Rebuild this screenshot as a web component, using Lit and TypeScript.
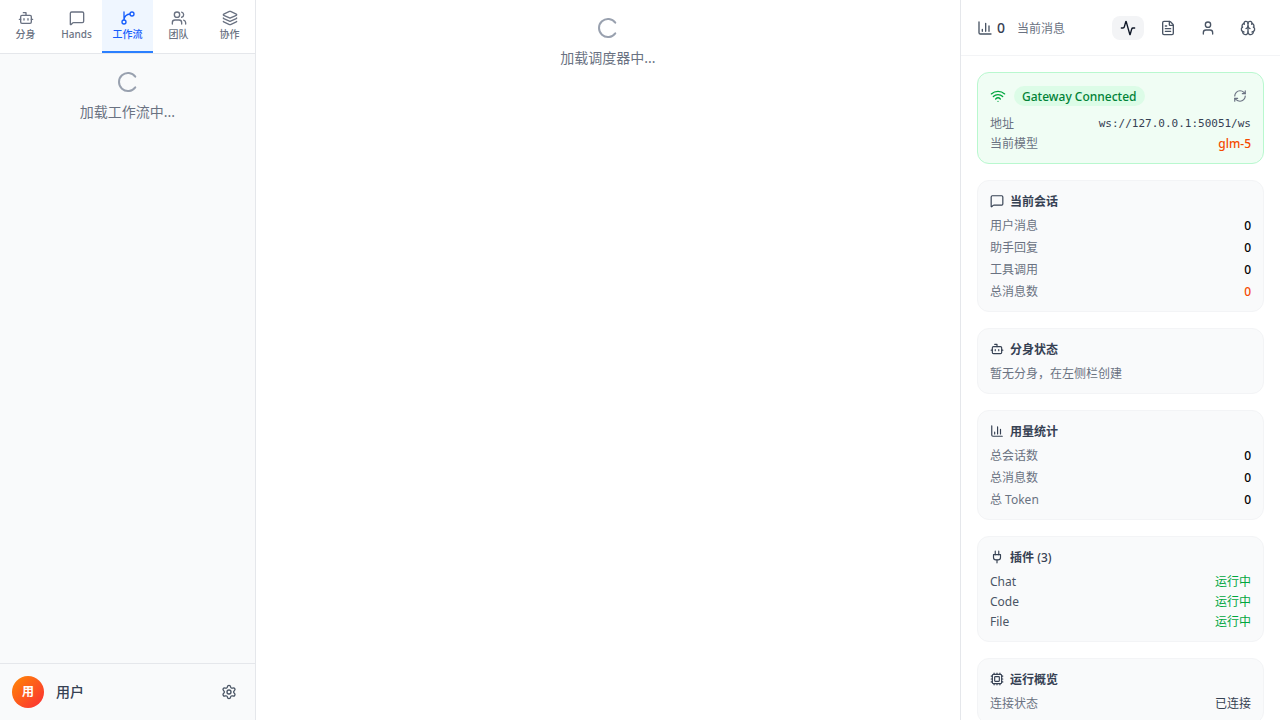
import { LitElement, html, svg, css, nothing } from "lit";
import { customElement, property, state } from "lit/decorators.js";
import { classMap } from "lit/directives/class-map.js";

const ICONS = {
  bot: svg`<path d="M12 8V4H8"/><rect width="16" height="12" x="4" y="8" rx="2"/><path d="M2 14h2M20 14h2M15 13v2M9 13v2"/>`,
  message: svg`<path d="M22 17a2 2 0 0 1-2 2H6.828a2 2 0 0 0-1.414.586l-2.202 2.202A.71.71 0 0 1 2 21.286V5a2 2 0 0 1 2-2h16a2 2 0 0 1 2 2z"/>`,
  branch: svg`<path d="M15 6a9 9 0 0 0-9 9V3"/><circle cx="18" cy="6" r="3"/><circle cx="6" cy="18" r="3"/>`,
  users: svg`<path d="M16 21v-2a4 4 0 0 0-4-4H6a4 4 0 0 0-4 4v2"/><path d="M16 3.128a4 4 0 0 1 0 7.744"/><path d="M22 21v-2a4 4 0 0 0-3-3.87"/><circle cx="9" cy="7" r="4"/>`,
  layers: svg`<path d="M12.83 2.18a2 2 0 0 0-1.66 0L2.6 6.08a1 1 0 0 0 0 1.83l8.58 3.91a2 2 0 0 0 1.66 0l8.58-3.9a1 1 0 0 0 0-1.83z"/><path d="M2 12a1 1 0 0 0 .58.91l8.6 3.91a2 2 0 0 0 1.65 0l8.58-3.9A1 1 0 0 0 22 12"/><path d="M2 17a1 1 0 0 0 .58.91l8.6 3.91a2 2 0 0 0 1.65 0l8.58-3.9A1 1 0 0 0 22 17"/>`,
  settings: svg`<path d="M9.671 4.136a2.34 2.34 0 0 1 4.659 0 2.34 2.34 0 0 0 3.319 1.915 2.34 2.34 0 0 1 2.33 4.033 2.34 2.34 0 0 0 0 3.831 2.34 2.34 0 0 1-2.33 4.033 2.34 2.34 0 0 0-3.319 1.915 2.34 2.34 0 0 1-4.659 0 2.34 2.34 0 0 0-3.32-1.915 2.34 2.34 0 0 1-2.33-4.033 2.34 2.34 0 0 0 0-3.831A2.34 2.34 0 0 1 6.35 6.051a2.34 2.34 0 0 0 3.319-1.915"/><circle cx="12" cy="12" r="3"/>`,
  chart: svg`<path d="M3 3v16a2 2 0 0 0 2 2h16"/><path d="M18 17V9M13 17V5M8 17v-3"/>`,
  activity: svg`<path d="M22 12h-2.48a2 2 0 0 0-1.93 1.46l-2.35 8.36a.25.25 0 0 1-.48 0L9.24 2.18a.25.25 0 0 0-.48 0l-2.35 8.36A2 2 0 0 1 4.49 12H2"/>`,
  file: svg`<path d="M6 22a2 2 0 0 1-2-2V4a2 2 0 0 1 2-2h8a2.4 2.4 0 0 1 1.704.706l3.588 3.588A2.4 2.4 0 0 1 20 8v12a2 2 0 0 1-2 2z"/><path d="M14 2v5a1 1 0 0 0 1 1h5"/><path d="M10 9H8M16 13H8M16 17H8"/>`,
  user: svg`<path d="M19 21v-2a4 4 0 0 0-4-4H9a4 4 0 0 0-4 4v2"/><circle cx="12" cy="7" r="4"/>`,
  brain: svg`<path d="M12 18V5"/><path d="M15 13a4.17 4.17 0 0 1-3-4 4.17 4.17 0 0 1-3 4"/><path d="M17.598 6.5A3 3 0 1 0 12 5a3 3 0 1 0-5.598 1.5"/><path d="M17.997 5.125a4 4 0 0 1 2.526 5.77"/><path d="M18 18a4 4 0 0 0 2-7.464"/><path d="M19.967 17.483A4 4 0 1 1 12 18a4 4 0 1 1-7.967-.517"/><path d="M6 18a4 4 0 0 1-2-7.464"/><path d="M6.003 5.125a4 4 0 0 0-2.526 5.77"/>`,
  wifi: svg`<path d="M12 20h.01"/><path d="M2 8.82a15 15 0 0 1 20 0"/><path d="M5 12.859a10 10 0 0 1 14 0"/><path d="M8.5 16.429a5 5 0 0 1 7 0"/>`,
  refresh: svg`<path d="M3 12a9 9 0 0 1 9-9 9.75 9.75 0 0 1 6.74 2.74L21 8"/><path d="M21 3v5h-5"/><path d="M21 12a9 9 0 0 1-9 9 9.75 9.75 0 0 1-6.74-2.74L3 16"/><path d="M8 16H3v5"/>`,
  plug: svg`<path d="M12 22v-5M9 8V2M15 8V2"/><path d="M18 8v5a4 4 0 0 1-4 4h-4a4 4 0 0 1-4-4V8Z"/>`,
  cpu: svg`<path d="M12 20v2M12 2v2M17 20v2M17 2v2M2 12h2M2 17h2M2 7h2M20 12h2M20 17h2M20 7h2M7 20v2M7 2v2"/><rect x="4" y="4" width="16" height="16" rx="2"/><rect x="8" y="8" width="8" height="8" rx="1"/>`,
  loader: svg`<path transform="rotate(36 12 12)" d="M21 12a9 9 0 1 1-6.219-8.56"/>`,
};

type IconName = keyof typeof ICONS;

@customElement("ui-icon")
class UiIcon extends LitElement {
  @property() name: IconName = "bot";
  @property({ type: Number }) size = 16;

  static styles = css`
    :host {
      display: block;
      flex: none;
    }
    svg {
      display: block;
      fill: none;
      stroke: currentColor;
      stroke-width: 2;
      stroke-linecap: round;
      stroke-linejoin: round;
    }
  `;

  render() {
    return html`<svg width=${this.size} height=${this.size} viewBox="0 0 24 24" aria-hidden="true">${ICONS[this.name]}</svg>`;
  }
}

@customElement("loading-note")
class LoadingNote extends LitElement {
  @property() label = "";

  static styles = css`
    :host {
      display: flex;
      flex-direction: column;
      align-items: center;
      gap: 8px;
      padding: 16px;
      font-size: 14px;
      line-height: 20px;
      color: #6a7282;
    }
    ui-icon {
      color: #99a1af;
    }
  `;

  render() {
    return html`<ui-icon name="loader" size="24"></ui-icon><span role="status">${this.label}</span>`;
  }
}

interface Row {
  label: string;
  value: string;
  tone?: "accent" | "ok" | "plain";
}

@customElement("info-card")
class InfoCard extends LitElement {
  @property() icon: IconName = "bot";
  @property() heading = "";
  @property() suffix = "";
  @property() note = "";
  @property({ type: Boolean }) compact = false;
  @property({ attribute: false }) rows: Row[] = [];

  static styles = css`
    :host {
      display: block;
      padding: 12px 12px 10px;
      border: 1px solid #f3f4f6;
      border-radius: 12px;
      background: #f9fafb;
      font-size: 12px;
      line-height: 18px;
      color: #6a7282;
    }
    h3 {
      display: flex;
      align-items: center;
      gap: 6px;
      margin: 0 0 6px;
      font-size: 12px;
      font-weight: 600;
      color: #364153;
    }
    h3 ui-icon {
      margin-bottom: 2px;
    }
    .suffix {
      font-weight: 500;
    }
    p,
    dl,
    dd {
      margin: 0;
    }
    dl {
      display: grid;
      gap: 4px;
    }
    .row {
      display: flex;
      justify-content: space-between;
    }
    dd {
      font-weight: 500;
      color: #000;
    }
    .accent {
      color: #f54a00;
    }
    .ok {
      font-weight: 400;
      color: #00a63e;
    }
    .plain {
      font-weight: 400;
      color: #364153;
    }
    .compact {
      gap: 2px;
      color: #4a5565;
    }
  `;

  render() {
    return html`
      <h3>
        <ui-icon name=${this.icon} size="14"></ui-icon>
        <span>${this.heading}${this.suffix ? html` <span class="suffix">${this.suffix}</span>` : nothing}</span>
      </h3>
      ${this.note ? html`<p>${this.note}</p>` : nothing}
      ${this.rows.length
        ? html`<dl class=${classMap({ compact: this.compact })}>
            ${this.rows.map(
              (r) => html`<div class="row"><dt>${r.label}</dt><dd class=${r.tone ?? ""}>${r.value}</dd></div>`
            )}
          </dl>`
        : nothing}
    `;
  }
}

@customElement("app-root")
class AppRoot extends LitElement {
  @state() private tab = "工作流";
  @state() private panel = "状态";

  private tabs: { icon: IconName; label: string }[] = [
    { icon: "bot", label: "分身" },
    { icon: "message", label: "Hands" },
    { icon: "branch", label: "工作流" },
    { icon: "users", label: "团队" },
    { icon: "layers", label: "协作" },
  ];

  private panels: { icon: IconName; label: string }[] = [
    { icon: "activity", label: "状态" },
    { icon: "file", label: "文件" },
    { icon: "user", label: "用户" },
    { icon: "brain", label: "记忆" },
  ];

  static styles = css`
    :host {
      display: grid;
      grid-template-columns: 256px minmax(0, 1fr) 320px;
      height: 100vh;
      overflow: hidden;
      background: #fff;
      color: #101828;
      font-family: "Noto Sans", "Noto Sans CJK SC", sans-serif;
      font-size: 14px;
      line-height: 20px;
    }
    * {
      box-sizing: border-box;
    }
    button {
      display: flex;
      align-items: center;
      margin: 0;
      padding: 0;
      border: 0;
      background: none;
      font: inherit;
      color: #4a5565;
      cursor: pointer;
    }
    .sidebar {
      display: flex;
      flex-direction: column;
      min-height: 0;
      border-right: 1px solid #e5e7eb;
      background: #f9fafb;
    }
    .tabs {
      display: flex;
      border-bottom: 1px solid #e5e7eb;
      background: #fff;
    }
    .tab {
      flex: 1;
      flex-direction: column;
      padding: 10px 0 8px;
      border-bottom: 2px solid transparent;
      font-size: 10px;
      line-height: 17px;
      font-weight: 500;
      color: #6a7282;
    }
    .tab.active {
      border-bottom-color: #2b7fff;
      background: #eff6ff;
      color: #155dfc;
    }
    .grow {
      flex: 1;
      min-height: 0;
    }
    .account {
      display: flex;
      align-items: center;
      gap: 12px;
      padding: 12px;
      border-top: 1px solid #e5e7eb;
    }
    .avatar {
      display: grid;
      place-items: center;
      width: 32px;
      height: 32px;
      border-radius: 50%;
      background: linear-gradient(to bottom right, #ff8904, #fb2c36);
      font-size: 12px;
      line-height: 18px;
      font-weight: 700;
      color: #fff;
    }
    .name {
      flex: 1;
      font-weight: 500;
      color: #364153;
    }
    .account button {
      padding: 6px;
    }
    .details {
      display: flex;
      flex-direction: column;
      min-height: 0;
      border-left: 1px solid #e5e7eb;
    }
    .topbar {
      display: flex;
      align-items: center;
      justify-content: space-between;
      height: 56px;
      padding: 0 16px;
      border-bottom: 1px solid #f3f4f6;
    }
    .count {
      display: flex;
      align-items: center;
      gap: 4px;
      font-weight: 500;
      color: #364153;
    }
    .count ui-icon {
      color: #4a5565;
    }
    .messages {
      display: flex;
      align-items: baseline;
      gap: 12px;
    }
    .caption {
      font-size: 12px;
      line-height: 16px;
      font-weight: 400;
      color: #6a7282;
    }
    .switcher {
      display: flex;
      gap: 8px;
    }
    .switcher button {
      padding: 4px 8px;
      border-radius: 8px;
    }
    .switcher .active {
      background: #f3f4f6;
      color: #101828;
    }
    .scroll {
      display: flex;
      flex: 1;
      flex-direction: column;
      gap: 16px;
      min-height: 0;
      padding: 16px;
      overflow-y: auto;
      scrollbar-width: none;
    }
    .scroll > * {
      flex: none;
    }
    .gateway {
      padding: 12px 12px 10px;
      border: 1px solid #b9f8cf;
      border-radius: 12px;
      background: #f0fdf4;
      font-size: 12px;
      line-height: 18px;
    }
    .gateway-head {
      display: flex;
      align-items: center;
      gap: 8px;
      margin-bottom: 8px;
      color: #00a63e;
    }
    .badge {
      padding: 2px 8px 0;
      border-radius: 10px;
      background: #dcfce7;
      font-weight: 500;
      color: #008236;
    }
    .gateway-head button {
      margin-left: auto;
      padding: 4px;
      color: #6a7282;
    }
    .facts {
      display: grid;
      gap: 2px;
      margin: 0;
      color: #6a7282;
    }
    .facts div {
      display: flex;
      justify-content: space-between;
    }
    .facts dd {
      margin: 0;
    }
    .address {
      font-family: "DejaVu Sans Mono", monospace;
      font-size: 11px;
      color: #364153;
    }
    .model {
      font-weight: 500;
      color: #f54a00;
    }
  `;

  private session: Row[] = [
    { label: "用户消息", value: "0" },
    { label: "助手回复", value: "0" },
    { label: "工具调用", value: "0" },
    { label: "总消息数", value: "0", tone: "accent" },
  ];
  private usage: Row[] = [
    { label: "总会话数", value: "0" },
    { label: "总消息数", value: "0" },
    { label: "总 Token", value: "0" },
  ];
  private plugins: Row[] = ["Chat", "Code", "File"].map((label) => ({ label, value: "运行中", tone: "ok" as const }));
  private runtime: Row[] = [{ label: "连接状态", value: "已连接", tone: "plain" }];

  render() {
    return html`
      <aside class="sidebar">
        <nav class="tabs">
          ${this.tabs.map(
            (t) => html`<button class=${classMap({ tab: true, active: t.label === this.tab })} @click=${() => (this.tab = t.label)}>
              <ui-icon name=${t.icon}></ui-icon><span>${t.label}</span>
            </button>`
          )}
        </nav>
        <div class="grow"><loading-note label="加载工作流中..."></loading-note></div>
        <div class="account">
          <span class="avatar">用</span>
          <span class="name">用户</span>
          <button aria-label="设置"><ui-icon name="settings"></ui-icon></button>
        </div>
      </aside>
      <main><loading-note label="加载调度器中..."></loading-note></main>
      <aside class="details">
        <header class="topbar">
          <div class="count">
            <ui-icon name="chart"></ui-icon>
            <div class="messages"><span>0</span><span class="caption">当前消息</span></div>
          </div>
          <div class="switcher">
            ${this.panels.map(
              (p) => html`<button class=${classMap({ active: p.label === this.panel })} aria-label=${p.label} @click=${() => (this.panel = p.label)}>
                <ui-icon name=${p.icon}></ui-icon>
              </button>`
            )}
          </div>
        </header>
        <div class="scroll">
          <section class="gateway">
            <div class="gateway-head">
              <ui-icon name="wifi"></ui-icon>
              <span class="badge">Gateway Connected</span>
              <button aria-label="刷新"><ui-icon name="refresh" size="14"></ui-icon></button>
            </div>
            <dl class="facts">
              <div><dt>地址</dt><dd class="address">ws://127.0.0.1:50051/ws</dd></div>
              <div><dt>当前模型</dt><dd class="model">glm-5</dd></div>
            </dl>
          </section>
          <info-card icon="message" heading="当前会话" .rows=${this.session}></info-card>
          <info-card icon="bot" heading="分身状态" note="暂无分身，在左侧栏创建"></info-card>
          <info-card icon="chart" heading="用量统计" .rows=${this.usage}></info-card>
          <info-card icon="plug" heading="插件" suffix="(3)" compact .rows=${this.plugins}></info-card>
          <info-card icon="cpu" heading="运行概览" .rows=${this.runtime}></info-card>
        </div>
      </aside>
    `;
  }
}
